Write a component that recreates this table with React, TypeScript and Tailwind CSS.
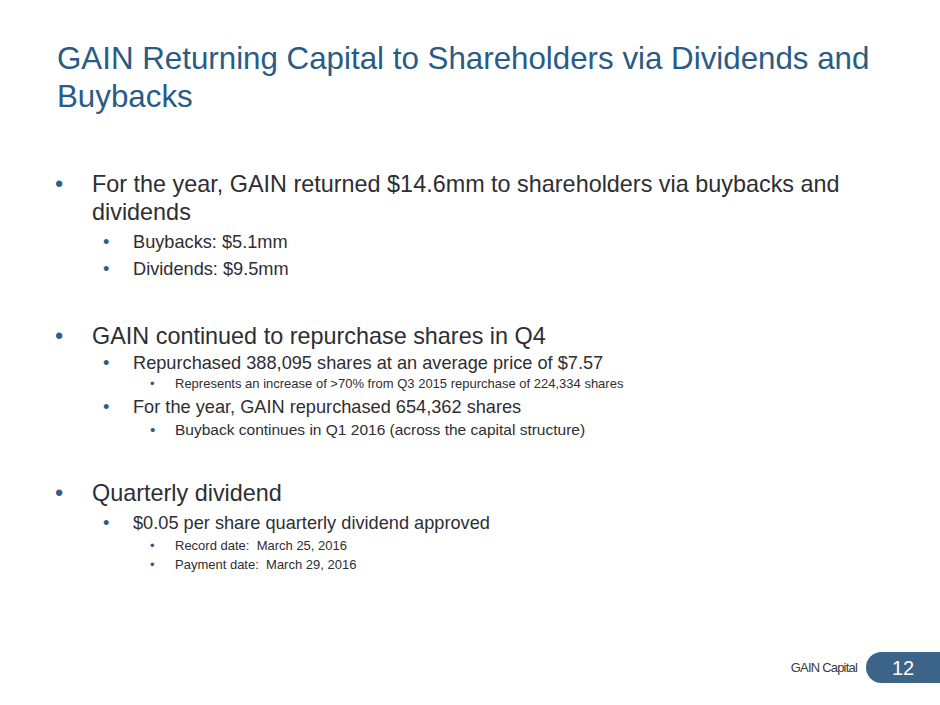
const font = { fontFamily: '"Liberation Sans", Arial, sans-serif' };

function Bullet({ level, children, className = "" }: { level: 1 | 2 | 3; children: React.ReactNode; className?: string }) {
  const cfg = {
    1: { row: "pl-[55px] text-[23.4px] leading-[28px]", dot: "w-[37px]" },
    2: { row: "pl-[103px] text-[18.2px] leading-[22px]", dot: "w-[30px]" },
    3: { row: "pl-[150px] text-[13px] leading-[18px]", dot: "w-[25px]" },
  }[level];
  return (
    <div className={`flex text-[#2e2e33] ${cfg.row} ${className}`}>
      <span className={`shrink-0 text-[#2e5e87] ${cfg.dot}`}>•</span>
      <span>{children}</span>
    </div>
  );
}

export default function App() {
  return (
    <div className="w-[940px] h-[705px] bg-white flex flex-col overflow-hidden" style={font}>
      <h1 className="pt-[40px] pl-[57px] pr-[40px] text-[31.3px] leading-[38px] text-[#2a5b84] font-normal">
        GAIN Returning Capital to Shareholders via Dividends and Buybacks
      </h1>

      <div className="mt-[54px] flex flex-col">
        <Bullet level={1} className="pr-[80px]">
          For the year, GAIN returned $14.6mm to shareholders via buybacks and dividends
        </Bullet>
        <Bullet level={2} className="mt-[3px] leading-[27px]">Buybacks: $5.1mm</Bullet>
        <Bullet level={2} className="leading-[27px]">Dividends: $9.5mm</Bullet>

        <Bullet level={1} className="mt-[39px]">GAIN continued to repurchase shares in Q4</Bullet>
        <Bullet level={2} className="mt-[2px]">Repurchased 388,095 shares at an average price of $7.57</Bullet>
        <Bullet level={3} className="mt-[1px]">
          Represents an increase of &gt;70% from Q3 2015 repurchase of 224,334 shares
        </Bullet>
        <Bullet level={2} className="mt-[3px]">For the year, GAIN repurchased 654,362 shares</Bullet>
        <Bullet level={3} className="mt-[3px] text-[15.5px]">
          Buyback continues in Q1 2016 (across the capital structure)
        </Bullet>

        <Bullet level={1} className="mt-[40px]">Quarterly dividend</Bullet>
        <Bullet level={2} className="mt-[5px]">$0.05 per share quarterly dividend approved</Bullet>
        <Bullet level={3} className="mt-[3px]">Record date:&nbsp; March 25, 2016</Bullet>
        <Bullet level={3} className="mt-[1px]">Payment date:&nbsp; March 29, 2016</Bullet>
      </div>

      <div className="mt-auto mb-[22px] flex items-center justify-end">
        <span className="text-[13px] text-[#3a3a40] tracking-[-0.8px] mr-[9px]">GAIN Capital</span>
        <div className="w-[74px] h-[31px] rounded-l-full bg-[#3c6488] flex items-center justify-center text-white text-[20px]">
          12
        </div>
      </div>
    </div>
  );
}
